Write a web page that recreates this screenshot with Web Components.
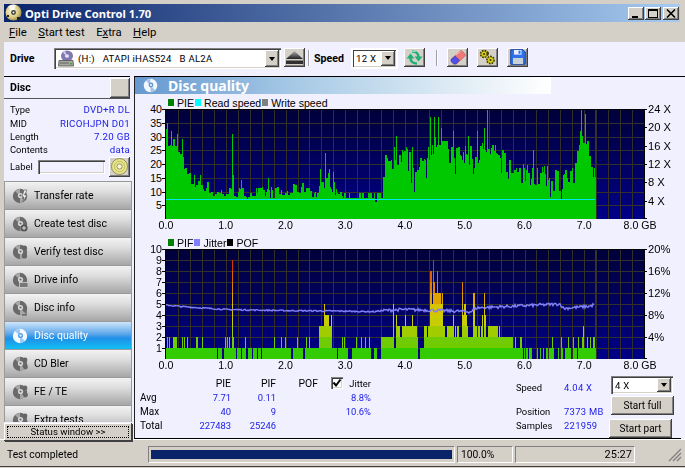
<!DOCTYPE html>
<html>
<head>
<meta charset="utf-8">
<title>Opti Drive Control 1.70</title>
<style>
  html, body { margin: 0; padding: 0; background: #d4d0c8; }
</style>
</head>
<body>

<odc-window>
  <odc-titlebar slot="title">Opti Drive Control 1.70</odc-titlebar>
  <odc-menubar slot="menu"></odc-menubar>
  <odc-toolbar slot="tools"></odc-toolbar>
  <odc-sidebar slot="side"></odc-sidebar>
  <odc-main slot="main"></odc-main>
  <odc-statusbar slot="status"></odc-statusbar>
</odc-window>

<script>
(function() {
  const UI = `Roboto, "Liberation Sans", sans-serif`;
  const HEAD = `"Noto Sans", "Liberation Sans", sans-serif`;
  const ARIAL = `"Liberation Sans", Arial, sans-serif`;
  const RAISED = `box-shadow: inset -1px -1px #404040, inset 1px 1px #fff, inset -2px -2px #808080;`;
  const SUNKEN = `box-shadow: inset 1px 1px #808080, inset 2px 2px #404040, inset -1px -1px #fff, inset -2px -2px #d4d0c8;`;

  let define = (name, html, init) => {
    customElements.define(name, class extends HTMLElement {
      constructor() {
        super();
        let markup = typeof html === 'function' ? html(this) : html;
        this.attachShadow({mode: 'open'}).innerHTML = markup;
      }
      connectedCallback() {
        if (init) init(this, this.shadowRoot);
      }
    });
  };

  /* ---------- icons ---------- */
  let discIcon = (body, hole, size, badge) => `
    <svg width="${size}" height="${size}" viewBox="0 0 16 16" style="display:block">
      <circle cx="8" cy="8" r="7.2" fill="${body}"/>
      <path d="M8 8 L3 3 A7 7 0 0 1 8 1 Z M8 8 L13 13 A7 7 0 0 1 8 15 Z" fill="${hole}" opacity=".55"/>
      <circle cx="8.5" cy="7.5" r="2.6" fill="${hole}"/>
      <circle cx="8.5" cy="7.5" r="1.1" fill="${body}"/>
      ${badge || ''}
    </svg>`;
  const BADGES = {
    transfer: `<path d="M12 2 L15 2 L12.5 7 L15 7 L11 14 L12 9 L10 9 Z" fill="#f0f0f0" stroke="#555" stroke-width=".6"/>`,
    create: `<circle cx="12" cy="12" r="3.6" fill="#555"/><path d="M12 10v4M10 12h4" stroke="#ddd"/>`,
    verify: `<circle cx="12.5" cy="4" r="2.6" fill="#666"/><circle cx="12.5" cy="12" r="2.6" fill="#666"/>`,
    drive: `<rect x="7.5" y="10.5" width="8.5" height="5" fill="#777" stroke="#ddd" stroke-width=".7"/>`,
    info: `<path d="M11 7h3v8h-4" fill="none" stroke="#666" stroke-width="1.4"/>`,
    plain: `<circle cx="13" cy="4" r="2.4" fill="#666"/><circle cx="13.5" cy="11" r="2.4" fill="#666"/>`
  };
  const ICON = {
    cd: `<svg width="18" height="18" viewBox="0 0 18 18" style="display:block">
      <defs><radialGradient id="cd" cx=".4" cy=".4" r=".7"><stop offset="0" stop-color="#fffbe0"/><stop offset=".6" stop-color="#d8c880"/><stop offset="1" stop-color="#8a7a40"/></radialGradient></defs>
      <circle cx="8.5" cy="8.5" r="8" fill="url(#cd)"/>
      <path d="M8.5 8.5 L3 2.6 A8 8 0 0 1 11 1 Z" fill="#fff" opacity=".8"/>
      <circle cx="8.5" cy="8.5" r="2.4" fill="#3a3a3a"/><circle cx="8.5" cy="8.5" r="1" fill="#fff"/>
      <rect x="12" y="13" width="3" height="3" fill="#222"/><rect x="2" y="11" width="2" height="2" fill="#222"/></svg>`,
    drive: `<svg width="16" height="17" viewBox="0 0 16 17" style="display:block">
      <ellipse cx="9" cy="6" rx="6" ry="5.6" fill="#8078b0"/><ellipse cx="9" cy="6" rx="2" ry="1.8" fill="#e8e8f4"/>
      <path d="M5 3 L9 6 L7 0.8Z" fill="#d0d0ea"/>
      <path d="M1 10.5 L15 10.5 L15.5 16 L0.5 16Z" fill="#a8a8a0" stroke="#505050" stroke-width=".8"/>
      <rect x="2" y="12.5" width="9" height="1" fill="#606060"/><rect x="12" y="13" width="2" height="1.5" fill="#30b030"/></svg>`,
    eject: `<svg width="17" height="13" viewBox="0 0 17 13" style="display:block">
      <defs><linearGradient id="ej" x1="0" y1="0" x2="0" y2="1"><stop offset="0" stop-color="#b0b0b0"/><stop offset="1" stop-color="#202020"/></linearGradient></defs>
      <path d="M8.5 0 L17 8 L0 8Z" fill="url(#ej)"/><rect x="0" y="9.5" width="17" height="3.5" fill="#303030"/></svg>`,
    refresh: `<svg width="17" height="15" viewBox="0 0 17 15" style="display:block">
      <g fill="none" stroke="#20b078" stroke-width="2.6">
        <path d="M11 13.5 C7 13.5 4.5 11.5 4.5 8"/><path d="M6 1.5 C10 1.5 12.5 3.5 12.5 7"/></g>
      <path d="M0.5 8.5 L4.5 3.5 L8.5 8.5Z M8.5 6.5 L12.5 11.5 L16.5 6.5Z" fill="#20b078"/>
      <path d="M6 1 L9.5 1.5" stroke="#b0f0d0"/></svg>`,
    eraser: `<svg width="16" height="15" viewBox="0 0 16 15" style="display:block">
      <path d="M1 9.5 L10 1 Q11 .2 12 1 L15 4 Q15.8 5 15 6 L6.5 14 L4 14Z" fill="#f07878" stroke="#b04848" stroke-width=".5"/>
      <path d="M1 9.5 L5 6 L9.5 10.2 L6 14 L3.6 14 L1 11.6Z" fill="#5050e8" stroke="#3030a0" stroke-width=".5"/>
      <path d="M6 4.8 L10.5 1.5" stroke="#ffc0c0" stroke-width="1"/></svg>`,
    gears: `<svg width="17" height="16" viewBox="0 0 17 16" style="display:block">
      <g fill="#c8c000" stroke="#403c00">
        <circle cx="5" cy="5" r="3.4" stroke-width="1.6" stroke-dasharray="1.7 1"/><circle cx="11.5" cy="11" r="3.6" stroke-width="1.6" stroke-dasharray="1.7 1"/></g>
      <circle cx="5" cy="5" r="2.3" fill="#d8d020"/><circle cx="11.5" cy="11" r="2.4" fill="#d8d020"/>
      <circle cx="5" cy="5" r="1.1" fill="#403c00"/><circle cx="11.5" cy="11" r="1.1" fill="#403c00"/>
      <path d="M8 2 L10 3.5 L9.5 6.5 L7.5 6Z" fill="#403c00"/></svg>`,
    floppy: `<svg width="16" height="16" viewBox="0 0 16 16" style="display:block">
      <path d="M.7 .7 H13 L15.3 3 V15.3 H.7Z" fill="#3070e8" stroke="#1840a0"/>
      <rect x="4" y="1" width="7.5" height="4.6" fill="#e8f0ff"/><rect x="8.5" y="1.6" width="2" height="3.2" fill="#3070e8"/>
      <rect x="3" y="9" width="10" height="6" fill="#c8d0d8"/></svg>`,
    cdbutton: `<svg width="17" height="17" viewBox="0 0 17 17" style="display:block">
      <circle cx="8.5" cy="8.5" r="8" fill="#e8e48a" stroke="#707040" stroke-width=".7"/>
      <circle cx="8.5" cy="8.5" r="5.2" fill="none" stroke="#a8a450" stroke-width=".6"/>
      <circle cx="8.5" cy="8.5" r="2.6" fill="#f8f8d8" stroke="#707040" stroke-width=".7"/></svg>`
  };

  /* ---------- window shell ---------- */
  define('odc-window', `
    <style>
      :host { display: block; width: 685px; height: 468px; overflow: hidden; background: #d4d0c8; position: relative; }
      .outer { display: flex; flex-direction: column; height: 100%; padding: 4px 0 0 4px; box-sizing: border-box; }
      .client { display: flex; height: 363px; background: #f0f0ff; flex: none; }
      ::slotted([slot=side]) { flex: none; }
      ::slotted([slot=main]) { flex: 1; min-width: 0; }
    </style>
    <div class="outer">
      <slot name="title"></slot>
      <slot name="menu"></slot>
      <slot name="tools"></slot>
      <div class="client">
        <slot name="side"></slot>
        <slot name="main"></slot>
      </div>
      <slot name="status"></slot>
    </div>`);

  define('odc-titlebar', `
    <style>
      :host { display: flex; align-items: center; height: 18px; width: 676px; color: #fff; flex: none;
        background: linear-gradient(90deg, #0a246a, #a6caf0); font: bold 11.2px ${HEAD}; }
      .cd { margin: -1px 2px 0 1px; }
      .txt { flex: 1; white-space: nowrap; }
      .btns { display: flex; margin-right: 1px; }
      .b { width: 16px; height: 13px; background: #d4d0c8; ${RAISED} display: flex; align-items: center; justify-content: center; }
      .b + .b { margin-left: 1px; }
      .b:last-child { margin-left: 2px; }
    </style>
    <span class="cd">${ICON.cd}</span>
    <span class="txt"><slot></slot></span>
    <span class="btns">
      <span class="b"><svg width="10" height="9"><rect x="1" y="7" width="6" height="2" fill="#000"/></svg></span>
      <span class="b"><svg width="10" height="9"><rect x=".5" y=".5" width="9" height="8" fill="none" stroke="#000"/><rect x="0" y="0" width="10" height="2" fill="#000"/></svg></span>
      <span class="b"><svg width="10" height="9"><path d="M1 0.5 L9 8.5 M9 0.5 L1 8.5" stroke="#000" stroke-width="1.6"/></svg></span>
    </span>`);

  define('odc-menubar', `
    <style>
      :host { display: flex; align-items: center; height: 20px; padding-left: 5px; font: 11.3px ${UI}; color: #000; flex: none; }
      span { margin-right: 11.5px; }
      u { text-underline-offset: 1px; }
    </style>
    <span><u>F</u>ile</span><span><u>S</u>tart test</span><span>E<u>x</u>tra</span><span><u>H</u>elp</span>`);

  /* ---------- buttons and combos ---------- */
  define('odc-btn', () => `
    <style>
      :host { display: inline-flex; align-items: center; justify-content: center; box-sizing: border-box; flex: none;
        width: 21px; height: 19px; background: #d4d0c8; ${RAISED} font: 10px ${UI}; color: #000; padding-bottom: 1px; white-space: nowrap; }
    </style>
    <slot></slot>`);

  define('odc-combo', () => `
    <style>
      :host { display: flex; align-items: center; box-sizing: border-box; flex: none; height: 19px; background: #fff;
        padding: 2px; ${SUNKEN} font: 9.6px ${UI}; letter-spacing: .25px; color: #000; white-space: pre; }
      .in { flex: 1; display: flex; align-items: center; min-width: 0; padding-left: 2px; gap: 4px; }
      .arrow { width: 14px; align-self: stretch; background: #d4d0c8; ${RAISED} display: flex; align-items: center; justify-content: center; }
      i { width: 0; height: 0; border: 3.5px solid transparent; border-top: 4px solid #000; border-bottom: 0; }
    </style>
    <span class="in"><slot name="icon"></slot><slot></slot></span>
    <span class="arrow"><i></i></span>`);

  define('odc-toolbar', `
    <style>
      :host { display: flex; align-items: center; height: 34px; background: #f0f0ff; font: bold 10.6px ${UI}; color: #000; box-sizing: border-box; flex: none; }
      .drive { margin-left: 6px; width: 44px; margin-top: -1px; }
      .sp { margin-left: 5px; width: 38px; margin-top: -2px; }
      .sep { width: 1px; height: 16px; background: #a0a0a0; box-shadow: 1px 0 #fff; flex: none; margin-top: -2px; }
      odc-btn { margin-top: -3px; }
      odc-combo { font-weight: normal; }
      .c1 { width: 227px; height: 21px; margin-top: -1px; }
      .c2 { width: 45px; margin-top: -2px; outline: 2px solid #fff; outline-offset: -1px; }
    </style>
    <span class="drive">Drive</span>
    <odc-combo class="c1"><span slot="icon">${ICON.drive}</span>(H:)   ATAPI iHAS524   B AL2A</odc-combo>
    <odc-btn style="margin-left:3px">${ICON.eject}</odc-btn>
    <span class="sep" style="margin-left:3px"></span>
    <span class="sp">Speed</span>
    <odc-combo class="c2">12 X</odc-combo>
    <odc-btn style="margin-left:7px">${ICON.refresh}</odc-btn>
    <span class="sep" style="margin-left:11px"></span>
    <odc-btn style="margin-left:10px">${ICON.eraser}</odc-btn>
    <odc-btn style="margin-left:9px">${ICON.gears}</odc-btn>
    <odc-btn style="margin-left:9px">${ICON.floppy}</odc-btn>`);

  /* ---------- left column ---------- */
  define('odc-navbtn', (el) => `
    <style>
      :host { display: flex; align-items: center; height: 28px; box-sizing: border-box; flex: none; padding-left: 7px;
        background: linear-gradient(#f2f2f2, #dedede 35%, #a6a6a6); border: solid #9a9a9a; border-width: 0 1px 1px 1px;
        font: 10.5px ${UI}; color: #000; white-space: nowrap; }
      :host([active]) { background: linear-gradient(#cfe6fb, #5aa5ea 45%, #1f8fe6 60%, #10c0f4); color: #fff; }
      .ic { width: 16px; margin-right: 6px; flex: none; }
    </style>
    <span class="ic">${el.hasAttribute('active')
      ? discIcon('#f4f8ff', '#5aa5ea', 16)
      : discIcon('#6a6a6a', '#d8d8d8', 16, BADGES[el.getAttribute('badge')] || BADGES.plain)}</span>
    <slot></slot>`);

  define('odc-sidebar', `
    <style>
      :host { display: block; width: 130px; font: 9.4px ${UI}; color: #000; position: relative; z-index: 1; }
      .head { display: flex; align-items: center; justify-content: space-between; height: 23px; box-sizing: border-box;
        border-top: 1px solid #000; border-bottom: 1px solid #555; padding-left: 6px; font-weight: bold; font-size: 10.6px; width: 126px; }
      .head b { width: 20px; height: 20px; background: #d4d0c8; ${RAISED} }
      .info { display: grid; grid-template-columns: auto 1fr; grid-auto-rows: 13.4px; align-items: center; padding: 4px 0 0 6px; width: 126px; box-sizing: border-box; height: 56px; }
      .info span:nth-child(even) { color: #2020e8; text-align: right; font-size: 9.7px; letter-spacing: .3px; white-space: nowrap; }
      .label { display: flex; align-items: center; height: 23px; padding-left: 6px; width: 126px; box-sizing: border-box; margin-bottom: 3px; }
      .label span { width: 28px; flex: none; }
      .label i { width: 67px; height: 14px; background: #f0f0ff; ${SUNKEN} box-sizing: border-box; flex: none; margin-right: 4px; }
      .label odc-btn { width: 21px; height: 20px; }
      .nav { height: 241px; overflow: hidden; width: 128px; border-top: 1px solid #999; box-sizing: border-box; }
      .status { position: absolute; left: 0; top: 347px; width: 128px; height: 18px; background: #d4d0c8;
        box-shadow: inset -1px -1px #404040, inset 1px 1px #fff, 1px 1px #404040; display: flex; }
      .status span { flex: 1; margin: 3px; border: 1px dotted #000; font-size: 9.6px; line-height: 10px; text-align: center; white-space: nowrap; }
    </style>
    <div class="head">Disc<b></b></div>
    <div class="info">
      <span>Type</span><span>DVD+R DL</span>
      <span>MID</span><span>RICOHJPN D01</span>
      <span>Length</span><span>7.20 GB</span>
      <span>Contents</span><span>data</span>
    </div>
    <div class="label"><span>Label</span><i></i><odc-btn>${ICON.cdbutton}</odc-btn></div>
    <div class="nav">
      <odc-navbtn badge="transfer">Transfer rate</odc-navbtn>
      <odc-navbtn badge="create">Create test disc</odc-navbtn>
      <odc-navbtn badge="verify">Verify test disc</odc-navbtn>
      <odc-navbtn badge="drive">Drive info</odc-navbtn>
      <odc-navbtn badge="info">Disc info</odc-navbtn>
      <odc-navbtn active>Disc quality</odc-navbtn>
      <odc-navbtn>CD Bler</odc-navbtn>
      <odc-navbtn>FE / TE</odc-navbtn>
      <odc-navbtn>Extra tests</odc-navbtn>
    </div>
    <div class="status"><span>Status window &gt;&gt;</span></div>`);

  /* ---------- chart data ---------- */
  let seed = 7;
  let rnd = () => { seed = (seed * 16807) % 2147483647; return seed / 2147483647; };
  const PX = 59.75;
  const END = 430;

  let lerp = (pts, gb) => {
    for (let i = 1; i < pts.length; i++) {
      if (gb <= pts[i][0]) {
        let a = pts[i - 1], b = pts[i];
        return a[1] + (b[1] - a[1]) * (gb - a[0]) / (b[0] - a[0]);
      }
    }
    return pts[pts.length - 1][1];
  };

  let pieData = () => {
    const ENV = [[0,30],[.05,24],[.12,28],[.2,27],[.28,19],[.38,14],[.5,12],[.65,12],[.8,9],[1,9.5],[1.3,9],[1.7,9.5],[2,9],[2.2,11],[2.4,11],[2.5,8.5],[2.6,12],
      [2.7,15],[2.8,11],[2.9,8.5],[3.6,8],[3.62,18],[3.75,20],[3.9,20],[4.05,21],[4.17,17],[4.3,18],[4.42,27],[4.55,29],[4.7,23],[5,22],[5.3,24],[5.5,22],[5.85,17],[6.15,16],
      [6.4,14],[6.8,14],[6.88,21],[6.94,32],[7.02,31],[7.1,20],[7.2,19]];
    const SPIKE = { 0.01:35, .09:32, .18:31, .26:29, .47:16, .57:16, 1.1:31, 1.12:16, 1.25:14, 1.7:15, 2.58:18, 2.66:24, 2.72:18, 2.8:17,
      3.72:21, 3.82:26, 3.85:30, 3.95:25, 4.02:26, 4.11:26, 4.42:37, 4.48:37, 4.55:37, 4.6:33, 4.8:32, 5.05:30, 5.2:32, 5.37:40, 5.33:33, 5.5:27, 6.15:25, 6.94:40, 7.02:38 };
    let out = [];
    for (let x = 0; x < END;) {
      let w = 1 + Math.floor(rnd() * 1.8);
      let gb = x / PX;
      let v = lerp(ENV, gb) + (rnd() - .45) * (gb > 3.6 ? 9 : gb < .4 ? 6 : 4.5);
      if (gb > 2.95 && gb < 3.6) v = rnd() < .1 ? 6 : rnd() < .3 ? 9.5 : 7.6;
      if (gb > 3.62 && rnd() < .1) v -= 4;
      for (let i = 0; i < w && x < END; i++, x++) out[x] = v;
    }
    for (let k in SPIKE) out[Math.round(k * PX)] = SPIKE[k];
    return out;
  };

  let pifData = () => {
    let out = new Array(END).fill(1);
    let a = x => (x - 93) / 3, b = x => 239 + x / 3;
    let set = (conv, list, h) => list.forEach(r => {
      let x0 = Math.round(conv(r[0])), x1 = Math.max(x0 + 1, Math.round(conv(r[1] === undefined ? r[0] : r[1])));
      for (let x = x0; x < x1 && x < END; x++) if (h === 0 || out[x] < h) out[x] = h;
    });
    set(a, [[245,250],[262,268],[302,306],[318,321],[332,338],[352,355],[365,368],[378,381],[468,474],[505,510],[605,608],[640,651],[708,718],[727,738],[745,748],[756,766]], 0);
    set(b, [[10,12],[40,44],[355,357],[360,362],[368,370],[380,395],[398,404],[408,413],[418,424],[428,430],[446,458],[462,468],[473,480],[497,503],[517,523]], 0);
    set(a, [[95,98],[103,106],[114,125],[142,144],[147,149],[155,157],[182,184],[187,189],[202,204],[271,273],[276,278],[283,285],[295,297],[331,333],[417,419],[437,439],[450,452],[485,487],[513,515],[523,525],[552,590],[622,624],[628,630],[663,665],[678,680],[690,692],[703,705],[738,778],[785,825],[830,840]], 2);
    set(a, [[552,590],[785,795],[800,825]], 3);
    set(a, [[568,578],[580,582],[587,590],[783,785],[810,812],[830,832]], 4);
    set(a, [[568,570],[775,777]], 5);
    set(b, [[0,3],[5,8],[14,40],[57,325],[330,332],[345,350],[440,442],[467,469],[490,492],[505,507],[520,522],[530,532],[545,547],[555,557],[565,570]], 2);
    set(b, [[0,3],[10,12],[16,36],[57,120],[125,135],[150,152],[160,162],[165,175],[185,195],[205,240],[250,280],[283,285],[535,537]], 3);
    set(b, [[75,115],[136,146],[155,157],[170,190],[205,215],[232,234],[240,242]], 4);
    set(b, [[75,105],[172,174],[178,182]], 5);
    set(b, [[75,115],[205,210],[238,240]], 6);
    // the tall block is striped in the reference, not solid
    for (let x = 258; x < 320; x++) {
      if (out[x] >= 3 && rnd() < .25) out[x] -= 1;
    }
    set(b, [[75,80],[85,90],[97,100],[172,174]], 7);
    set(b, [[75,80],[97,99]], 8);
    set(b, [[85,87]], 9);
    set(a, [[291,293]], 9);
    return out;
  };

  const LEVEL = ['#33cc00','#70cc00','#a0cc00','#c8cc00','#d8c400','#e0a400','#e08000','#e06000','#e03000','#f00000'];

  let drawChart = (ctx, kind) => {
    const L = 4, W = 478, H = 110;
    let lines = kind === 'pie' ? 8 : 10;
    // axis ticks
    ctx.fillStyle = '#000';
    for (let i = 0; i < lines; i++) ctx.fillRect(0, Math.round(i * H / lines), 4, 1);
    let rl = kind === 'pie' ? 6 : 5;
    for (let i = 0; i <= rl; i++) ctx.fillRect(L + W, Math.min(H - 1, Math.round(i * H / rl)), 3, 1);
    // plot background
    let g = ctx.createLinearGradient(0, 0, 0, H);
    g.addColorStop(0, '#00003a');
    g.addColorStop(1, '#000088');
    ctx.fillStyle = g;
    ctx.fillRect(L, 0, W, H);
    ctx.fillStyle = '#33302a';
    for (let x = 12; x < W; x += 11.95) ctx.fillRect(L + Math.round(x), 0, 1, H);
    for (let i = 1; i < lines; i++) ctx.fillRect(L, Math.round(i * H / lines), W, 1);
    // data
    if (kind === 'pie') {
      let d = pieData();
      ctx.fillStyle = '#00c800';
      d.forEach((v, x) => {
        let h = Math.round(v * H / 40);
        ctx.fillRect(L + x, H - h, 1, h);
      });
      ctx.fillStyle = '#800080';
      ctx.fillRect(L + 429, 0, 1, 68);
      ctx.fillStyle = '#00e8e8';
      ctx.fillRect(L, 90, END - 1, 1);
    } else {
      let d = pifData();
      d.forEach((v, x) => {
        for (let u = 0; u < v; u++) {
          ctx.fillStyle = LEVEL[u];
          ctx.fillRect(L + x, H - (u + 1) * 11, 1, 11);
        }
      });
      ctx.fillStyle = '#800080';
      ctx.fillRect(L + 429, 0, 1, 88);
      const JIT = [[0,4.9],[.3,4.75],[1,4.5],[2,4.4],[3,4.35],[3.5,4.3],[3.6,4.4],[4,4.5],[4.6,4.4],[5.1,4.3],[5.2,4.65],[6,4.85],[6.6,5],[6.65,4.6],[7.1,4.8],[7.18,5],[7.2,5.4]];
      ctx.strokeStyle = '#8080f8';
      ctx.lineWidth = 1.4;
      ctx.beginPath();
      for (let x = 0; x < END - 1; x++) {
        let gb = x / PX;
        let v = lerp(JIT, gb) + (rnd() - .5) * (gb > 3.6 ? .28 : .12);
        let y = H - v * 11;
        if (x) ctx.lineTo(L + x, y); else ctx.moveTo(L + x, y);
      }
      ctx.stroke();
    }
    // frame
    ctx.fillStyle = '#000';
    ctx.fillRect(L - 1, 0, 1, H);
    ctx.fillRect(L - 1, 0, W + 2, 1);
    ctx.fillRect(L + W, 0, 1, H);
  };

  /* ---------- chart element ---------- */
  define('odc-legend', (el) => `
    <style>
      :host { display: inline-flex; align-items: center; margin-right: 1px; }
      i { width: 6px; height: 7px; background: ${el.getAttribute('color')}; margin-right: 3px; flex: none; }
    </style>
    <i></i><slot></slot>`);

  define('odc-chart', (el) => {
    let left = el.getAttribute('left').split(',');
    let right = el.getAttribute('right').split(',');
    let lh = 110 / left.length, rh = 110 / right.length;
    let xs = ['0.0','1.0','2.0','3.0','4.0','5.0','6.0','7.0','8.0 GB'];
    return `
    <style>
      :host { display: block; font: 10.6px ${ARIAL}; color: #000; }
      .legend { display: flex; align-items: center; height: 13px; padding-left: 33px; white-space: nowrap; }
      .row { display: flex; height: 110px; }
      .yl { width: 27px; margin-top: -7px; text-align: right; flex: none; }
      .yl div { height: ${lh}px; line-height: 14px; }
      .yr { margin-top: -7px; flex: none; }
      .yr div { height: ${rh}px; line-height: 14px; font-size: 11.2px; }
      canvas { display: block; flex: none; }
      .xs { display: grid; grid-template-columns: repeat(8, 59.75px) 60px; margin-left: 1.1px; height: 17px; }
      .xs span { text-align: center; line-height: 12px; white-space: nowrap; }
      .xs span:last-child { margin-left: -2px; width: 56px; }
    </style>
    <div class="legend"><slot></slot></div>
    <div class="row">
      <div class="yl">${left.map(t => `<div>${t}</div>`).join('')}</div>
      <canvas width="486" height="110"></canvas>
      <div class="yr">${right.map(t => `<div>${t}</div>`).join('')}</div>
    </div>
    <div class="xs">${xs.map(t => `<span>${t}</span>`).join('')}</div>`;
  }, (el, root) => {
    drawChart(root.querySelector('canvas').getContext('2d'), el.getAttribute('kind'));
  });

  /* ---------- main panel ---------- */
  define('odc-stats', `
    <style>
      :host { display: flex; font: 9.4px ${UI}; color: #000; height: 62px; white-space: nowrap; flex: none; }
      .tbl { display: grid; grid-template-columns: 50px 41px 45px 42px 53px; grid-auto-rows: 14px; align-items: center; margin: 0 0 0 5px; align-content: start; }
      .tbl > * { text-align: right; }
      .tbl > .l { text-align: left; font-size: 10px; }
      .tbl > .h { font-size: 10.4px; }
      .v { color: #2020e8; }
      .jit { display: flex; align-items: center; justify-content: flex-end; }
      .jit i { width: 12px; height: 12px; background: #fff; ${SUNKEN} margin-right: 6px; display: flex; align-items: center; justify-content: center; flex: none; }
      .sum { display: grid; grid-template-columns: 48px 45px; grid-template-rows: 14px 10px 14px 14px; margin: 4px 0 0 145px; align-items: center; align-content: start; }
      .sum .gap { grid-column: 1 / -1; height: 10px; }
      .sum .v { letter-spacing: .3px; }
      .btns { display: flex; flex-direction: column; }
      odc-combo { width: 62px; margin-left: 2px; height: 18px; }
      odc-btn { width: 63px; height: 19px; }
    </style>
    <div class="tbl">
      <span></span><span class="h">PIE</span><span class="h">PIF</span><span class="h">POF</span>
      <span class="jit"><i><svg width="10" height="10"><path d="M1.5 4.5 L4 7.5 L8.5 1.5" fill="none" stroke="#000" stroke-width="2"/></svg></i>Jitter</span>
      <span class="l">Avg</span><span class="v">7.71</span><span class="v">0.11</span><span></span><span class="v">8.8%</span>
      <span class="l">Max</span><span class="v">40</span><span class="v">9</span><span></span><span class="v">10.6%</span>
      <span class="l">Total</span><span class="v">227483</span><span class="v">25246</span><span></span><span></span>
    </div>
    <div class="sum">
      <span>Speed</span><span class="v">4.04 X</span>
      <span class="gap"></span>
      <span>Position</span><span class="v">7373 MB</span>
      <span>Samples</span><span class="v">221959</span>
    </div>
    <div class="btns">
      <odc-combo>4 X</odc-combo>
      <odc-btn style="margin:2px 0 0 2px">Start full</odc-btn>
      <odc-btn style="margin-top:4px">Start part</odc-btn>
    </div>`);

  define('odc-main', `
    <style>
      :host { display: block; border-left: 1px solid #222; box-sizing: border-box; }
      .line { height: 1px; background: #000; margin-left: -1px; }
      .head { display: flex; align-items: center; height: 17px; width: 416px; padding-left: 8px; box-sizing: border-box; color: #fff; margin-bottom: 2px;
        background: linear-gradient(90deg, #6699d0, #a9cbe6 40%, #dceaf4 75%, #ffffff); font: bold 14px ${HEAD}; }
      .head span { margin-left: 10px; }
      .bottom { height: 1px; background: #000; margin-left: -1px; width: 547px; }
    </style>
    <div class="line"></div>
    <div class="head">${discIcon('#f4f8ff', '#6699d0', 15)}<span>Disc quality</span></div>
    <odc-chart kind="pie" left="40,35,30,25,20,15,10,5" right="24 X,20 X,16 X,12 X,8 X,4 X">
      <odc-legend color="#008000">PIE</odc-legend>
      <odc-legend color="#00ffff">Read speed</odc-legend>
      <odc-legend color="#808080">Write speed</odc-legend>
    </odc-chart>
    <odc-chart kind="pif" left="10,9,8,7,6,5,4,3,2,1" right="20%,16%,12%,8%,4%">
      <odc-legend color="#008000">PIF</odc-legend>
      <odc-legend color="#8080ff">Jitter</odc-legend>
      <odc-legend color="#000000">POF</odc-legend>
    </odc-chart>
    <odc-stats></odc-stats>
    <div class="bottom"></div>`);

  /* ---------- status bar ---------- */
  define('odc-statusbar', `
    <style>
      :host { display: flex; align-items: center; height: 28px; margin-left: -4px; padding: 5px 0 1px 4px; box-sizing: border-box; border-bottom: 1px solid #404040;
        box-shadow: inset 0 1px #fff; font: 10.3px ${UI}; color: #000; white-space: nowrap; flex: none; }
      .p { height: 17px; box-sizing: border-box; border: 1px solid; border-color: #808080 #fff #fff #808080; display: flex; align-items: center; flex: none; padding: 0 2px; margin-right: 2px; }
      .bar { flex: 1; height: 9px; background: #0a246a; }
      svg { display: block; margin: 0 0 0 6px; }
    </style>
    <span class="p" style="width:142px;border-color:transparent">Test completed</span>
    <span class="p" style="width:307px"><span class="bar"></span></span>
    <span class="p" style="width:56px;padding-left:3px">100.0%</span>
    <span class="p" style="width:120px;justify-content:flex-end;font-size:11px">25:27</span>
    <svg width="40" height="15"><path d="M38 2 L26 14 M38 6 L30 14 M38 10 L34 14" stroke="#808080" stroke-width="1.3"/></svg>`);
})();
</script>
</body>
</html>
